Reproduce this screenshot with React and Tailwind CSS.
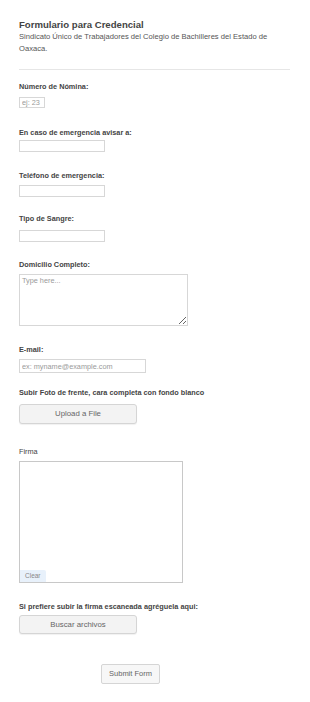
export default function App() {
  const label = "block text-[7.3px] leading-[10px] font-bold text-[#444]";
  const input = "block border border-[#d7d7d7] bg-white px-[2px] text-[7.3px] text-[#888] placeholder-[#9a9a9a] outline-none";
  const btn = "block rounded-[3px] border border-[#d5d5d5] bg-[#f3f3f3] text-[7.8px] text-[#666] shadow-[0_1px_1px_rgba(0,0,0,0.06)]";
  return (
    <div className="min-h-[702px] w-[310px] bg-white font-['Liberation_Sans',Arial,sans-serif]">
      <div className="pl-[19px] pr-[20px]">
        <h1 className="pt-[18px] text-[9.6px] leading-[13px] font-bold text-[#444]">Formulario para Credencial</h1>
        <p className="text-[7.6px] leading-[12px] text-[#555]">
          Sindicato Único de Trabajadores del Colegio de Bachilleres del Estado de Oaxaca.
        </p>
        <div className="mt-[14px] border-t border-[#e6e6e6]" />

        <label className={`${label} mt-[12px]`}>Número de Nómina:</label>
        <input className={`${input} mt-[5px] h-[11px] w-[26px]`} placeholder="ej: 23" />

        <label className={`${label} mt-[20px]`}>En caso de emergencia avisar a:</label>
        <input className={`${input} mt-[2px] h-[12px] w-[86px]`} />

        <label className={`${label} mt-[19px]`}>Teléfono de emergencia:</label>
        <input className={`${input} mt-[4px] h-[12px] w-[86px]`} />

        <label className={`${label} mt-[17px]`}>Tipo de Sangre:</label>
        <input className={`${input} mt-[6px] h-[12px] w-[86px]`} />

        <label className={`${label} mt-[18px]`}>Domicilio Completo:</label>
        <textarea
          className={`${input} mt-[4px] h-[52px] w-[169px] resize-y pt-[1px] leading-[10px]`}
          placeholder="Type here..."
        />

        <label className={`${label} mt-[19px]`}>E-mail:</label>
        <input className={`${input} mt-[4px] h-[14px] w-[127px]`} placeholder="ex: myname@example.com" />

        <label className={`${label} mt-[15px]`}>Subir Foto de frente, cara completa con fondo blanco</label>
        <button className={`${btn} mt-[6px] h-[20px] w-[118px]`}>Upload a File</button>

        <label className={`${label} mt-[23px] font-normal text-[#333]`}>Firma</label>
        <div className="relative mt-[4px] h-[122px] w-[164px] border border-[#c8c8c8] bg-white">
          <span className="absolute bottom-0 left-0 rounded-tr-[2px] bg-[#e8f1fb] px-[5px] py-[2px] text-[6.5px] leading-[8px] text-[#888]">
            Clear
          </span>
        </div>

        <label className={`${label} mt-[19px]`}>Si prefiere subir la firma escaneada agréguela aqui:</label>
        <button className={`${btn} mt-[3px] h-[19px] w-[118px]`}>Buscar archivos</button>

        <button className="mt-[30px] ml-[82px] block h-[20px] w-[59px] rounded-[2px] border border-[#d5d5d5] bg-[#f7f7f7] text-[7.5px] text-[#666]">
          Submit Form
        </button>
      </div>
    </div>
  );
}
